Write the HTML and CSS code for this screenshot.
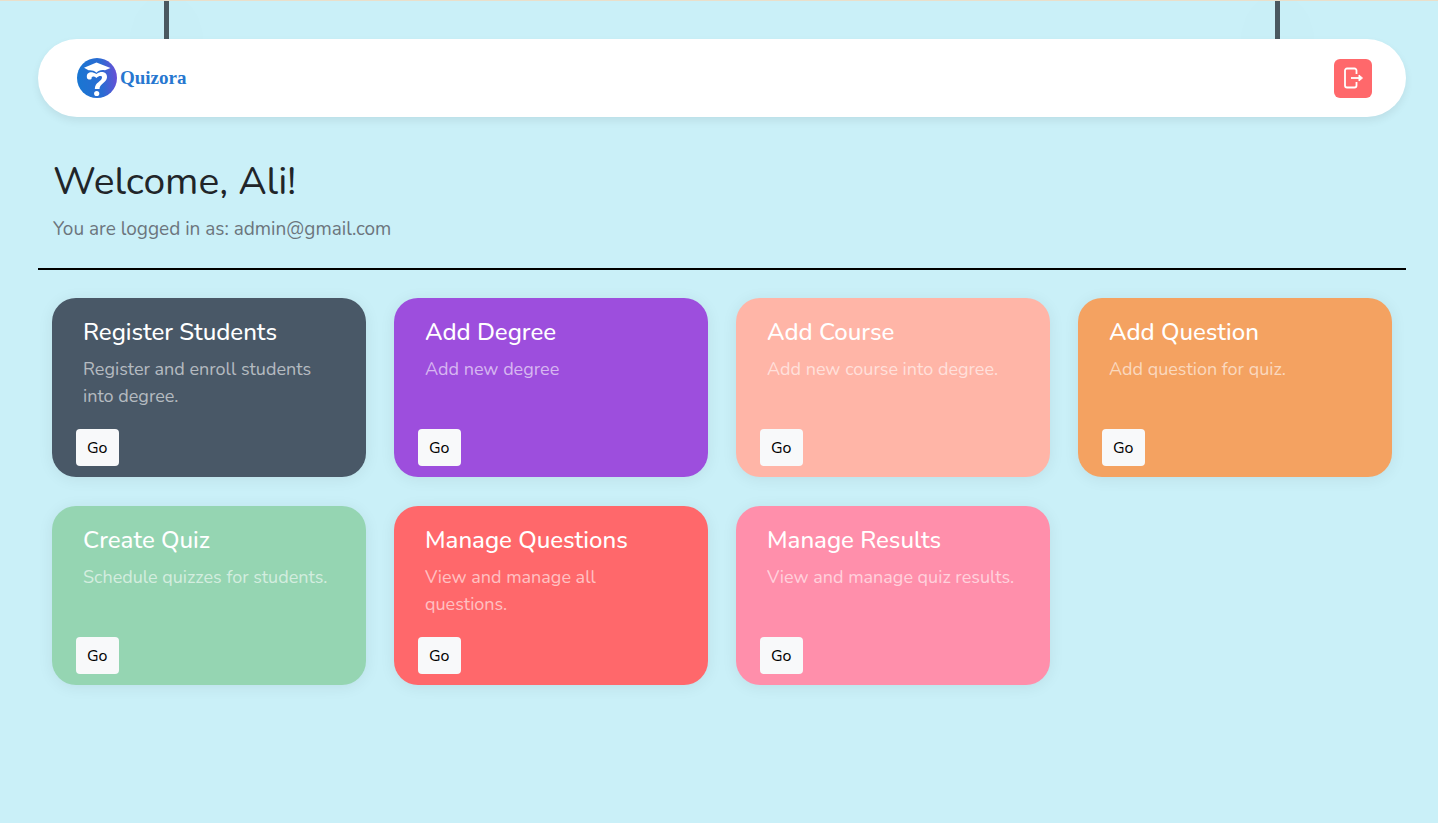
FILE: index.html
```html
<!DOCTYPE html>
<html lang="en">
<head>
<meta charset="utf-8">
<meta name="viewport" content="width=device-width, initial-scale=1">
<title>Quizora</title>
<link rel="stylesheet" href="styles.css">
</head>
<body>
<div class="page">
  <header class="hanger">
    <span class="rope rope-left"></span>
    <span class="rope rope-right"></span>
    <nav class="navbar">
      <a class="brand" href="#">
        <svg class="brand-mark" viewBox="0 0 40 40" aria-hidden="true">
          <defs><linearGradient id="mark" x1="0" y1="0.4" x2="1" y2="0.3"><stop offset="0" stop-color="#1976d2"/><stop offset="0.6" stop-color="#2a6bd2"/><stop offset="1" stop-color="#6a4fd6"/></linearGradient></defs>
          <circle cx="20" cy="20" r="20" fill="url(#mark)"/>
          <path d="M10 20C9 15 13 12.500 19.500 16C25 12 30.500 14.500 30 19.500C29.500 25 22.500 25.500 22.500 31H17.800C17.800 24 25 23.500 25 19.500C25 17.500 22 17.500 19.500 20C16.500 18 14.500 18 14.500 21C12.500 22 10.500 21.500 10 20Z" fill="#fff"/>
          <path d="M7 9.800L19.500 4.500L33.500 10L28 12.300C24 11.500 21.500 12.800 19.500 14.700C17 12.500 14.500 12 11.500 12.300Z" fill="#fff"/>
          <circle cx="19.700" cy="35.500" r="2.600" fill="#fff"/>
        </svg>
        <span class="brand-name">Quizora</span>
      </a>
      <button class="logout" type="button" aria-label="Log out">
        <svg viewBox="0 0 20 22" aria-hidden="true" fill="none" stroke="#fff" stroke-width="1.800" stroke-linejoin="round">
          <path d="M13.500 7V3.500A2 2 0 0 0 11.500 1.500H4A2 2 0 0 0 2 3.500V18.500A2 2 0 0 0 4 20.500H11.500A2 2 0 0 0 13.500 18.500V15"/>
          <path d="M8 11H17"/><path d="M16 8V14L19.500 11Z" fill="#fff" stroke-width="1"/>
        </svg>
      </button>
    </nav>
  </header>
  <main>
    <section class="welcome">
      <h1>Welcome, Ali!</h1>
      <p>You are logged in as: admin@gmail.com</p>
    </section>
    <section class="cards">
      <article class="card slate"><h2>Register Students</h2><p>Register and enroll students into degree.</p><button type="button">Go</button></article>
      <article class="card purple"><h2>Add Degree</h2><p>Add new degree</p><button type="button">Go</button></article>
      <article class="card peach"><h2>Add Course</h2><p>Add new course into degree.</p><button type="button">Go</button></article>
      <article class="card orange"><h2>Add Question</h2><p>Add question for quiz.</p><button type="button">Go</button></article>
      <article class="card green"><h2>Create Quiz</h2><p>Schedule quizzes for students.</p><button type="button">Go</button></article>
      <article class="card red"><h2>Manage Questions</h2><p>View and manage all questions.</p><button type="button">Go</button></article>
      <article class="card pink"><h2>Manage Results</h2><p>View and manage quiz results.</p><button type="button">Go</button></article>
    </section>
  </main>
</div>
</body>
</html>
```
FILE: styles.css
```css
* { box-sizing: border-box; }
body {
  margin: 0;
  min-height: 100vh;
  background: #caf0f8;
  border-top: 1px solid #eadfca;
  color: #212529;
  font-family: Nunito, Lato, "Open Sans", sans-serif;
}
h1, h2, p { margin: 0; font-weight: 400; }
button { font-family: inherit; border: 0; cursor: pointer; }
.page { padding: 0 32px 32px 38px; }
.hanger { position: relative; padding-top: 38px; }
.rope {
  position: absolute;
  top: 0;
  width: 5px;
  height: 76px;
  background: #495860;
  box-shadow: 0 10px 60px 14px rgba(73, 88, 96, .02);
}
.rope-left { left: 126px; }
.rope-right { right: 126px; }
.navbar {
  position: relative;
  display: flex;
  align-items: center;
  justify-content: space-between;
  padding: 19px 34px 19px 39px;
  background: #fff;
  border-radius: 40px;
  box-shadow: 0 4px 8px rgba(0, 0, 0, .07);
}
.brand { display: flex; align-items: center; gap: 3px; color: #2777d0; text-decoration: none; }
.brand-mark { width: 40px; height: 40px; }
.brand-name { font: 700 19px/40px "Liberation Serif", serif; }
.logout {
  display: grid;
  place-items: center;
  width: 38px;
  height: 39px;
  padding: 0;
  border-radius: 6px;
  background: #ff686b;
}
.logout svg { width: 20px; height: 22px; }
.welcome {
  padding: 41px 15px 23px;
  border-bottom: 2px solid #000;
}
.welcome h1 { font-size: 39px; line-height: 48px; }
.welcome p { margin-top: 7px; font-size: 19px; line-height: 32px; color: #6c757d; }
.cards {
  display: grid;
  grid-template-columns: repeat(4, minmax(0, 1fr));
  gap: 29px 28px;
  padding: 28px 14px;
}
.card {
  display: flex;
  flex-direction: column;
  align-items: flex-start;
  min-height: 179px;
  padding: 18px 24px 11px;
  border-radius: 24px;
  color: #fff;
  box-shadow: 0 2px 16px rgba(0, 0, 0, .07);
}
.card h2 { padding: 0 7px; font-size: 24px; font-weight: 500; line-height: 32px; }
.card p { margin-top: 8px; padding: 0 7px; font-size: 18px; line-height: 27px; color: rgba(255, 255, 255, .6); }
.card button {
  margin-top: auto;
  height: 37px;
  padding: 0 11px;
  border-radius: 4px;
  background: #f8f9fa;
  color: #000;
  font-size: 16px;
}
.slate { background: #495867; }
.purple { background: #9d4edd; }
.peach { background: #ffb5a7; }
.orange { background: #f4a261; }
.green { background: #95d5b2; }
.red { background: #ff686b; }
.pink { background: #ff8fab; }
```
